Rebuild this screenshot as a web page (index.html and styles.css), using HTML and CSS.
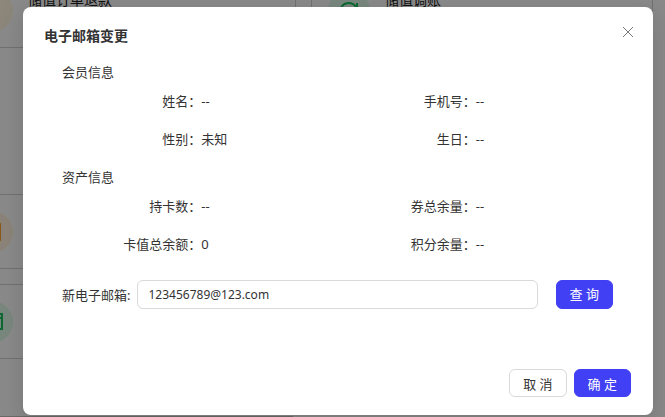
FILE: index.html
```html
<!DOCTYPE html>
<html lang="zh-CN">
<head>
    <meta charset="UTF-8">
    <meta name="viewport" content="width=device-width, initial-scale=1.0">
    <title>电子邮箱变更</title>
    <link rel="stylesheet" href="styles.css">
</head>
<body>
    <!-- Page behind the dialog, scrolled -->
    <div class="page" aria-hidden="true">
        <div class="cards">
            <div class="card">
                <span class="icon yellow"></span>
                <span class="card-title">储值订单退款</span>
            </div>
            <div class="card">
                <span class="icon green">
                    <svg viewBox="0 0 20 20" width="20" height="20"><path d="M2 7a8.5 8.5 0 0 1 15-1M18 2v5h-5M18 13a8.5 8.5 0 0 1-15 1M2 18v-5h5" /></svg>
                </span>
                <span class="card-title">储值调账</span>
            </div>
        </div>
        <div class="cards section">
            <div class="card">
                <span class="icon orange">
                    <svg viewBox="0 0 20 20" width="20" height="20"><path d="M1 2h17v16H1z" /></svg>
                </span>
            </div>
            <div class="card">
                <span class="icon green"></span>
            </div>
            <div class="card">
                <span class="icon green">
                    <svg viewBox="0 0 22 22" width="22" height="22"><path d="M1 3h20v15H1zM1 7h20" /></svg>
                </span>
            </div>
        </div>
        <div class="page-end"></div>
    </div>

    <div class="mask">
        <div class="modal" role="dialog" aria-labelledby="title">
            <div class="modal-header">
                <h1 id="title">电子邮箱变更</h1>
                <button class="close" aria-label="关闭">
                    <svg viewBox="0 0 12 12" width="12" height="12"><path d="M1 1l10 10M11 1L1 11" /></svg>
                </button>
            </div>

            <div class="modal-body">
                <h2>会员信息</h2>
                <dl class="info">
                    <div class="item"><dt>姓名：</dt><dd>--</dd></div>
                    <div class="item"><dt>手机号：</dt><dd>--</dd></div>
                    <div class="item"><dt>性别：</dt><dd>未知</dd></div>
                    <div class="item"><dt>生日：</dt><dd>--</dd></div>
                </dl>

                <h2>资产信息</h2>
                <dl class="info">
                    <div class="item"><dt>持卡数：</dt><dd>--</dd></div>
                    <div class="item"><dt>券总余量：</dt><dd>--</dd></div>
                    <div class="item"><dt>卡值总余额：</dt><dd>0</dd></div>
                    <div class="item"><dt>积分余量：</dt><dd>--</dd></div>
                </dl>

                <div class="search">
                    <label for="email">新电子邮箱:</label>
                    <input type="text" id="email" value="123456789@123.com">
                    <button class="btn primary">查 询</button>
                </div>
            </div>

            <div class="modal-footer">
                <button class="btn">取 消</button>
                <button class="btn primary">确 定</button>
            </div>
        </div>
    </div>
</body>
</html>
```
FILE: styles.css
```css
* {
    box-sizing: border-box;
}
body {
    margin: 0;
    overflow: hidden;
    font-family: "Noto Sans", "Noto Sans CJK SC", sans-serif;
    font-size: 13px;
    line-height: 20px;
    color: #333;
}
h1, h2, dl, dd {
    margin: 0;
    font-size: 13px;
}
h2 {
    font-weight: normal;
}

/* Page behind */
.page {
    position: fixed;
    inset: 0;
    overflow: hidden;
    background-color: #fcfcfc;
}
.cards {
    display: grid;
    grid-template-columns: 1fr 1fr;
    gap: 15px;
    margin: -27px 12px 0 -46px;
}
.section {
    margin-top: 146px;
}
.card {
    display: flex;
    align-items: center;
    gap: 15px;
    height: 75px;
    padding: 0 16px;
    border: 1px solid #d0d0d0;
}
.section .card:nth-child(2) {
    visibility: hidden;
}
.icon {
    display: flex;
    align-items: center;
    justify-content: center;
    width: 42px;
    height: 42px;
    border-radius: 50%;
}
.icon svg {
    fill: none;
    stroke: currentColor;
    stroke-width: 2;
}
.yellow {
    background-color: #fff6df;
}
.orange {
    background-color: #fff1dc;
    color: #ff9f2e;
}
.green {
    background-color: #dcf7e5;
    color: #18c060;
}
.card-title {
    margin-bottom: 22px;
    font-size: 14px;
    color: #222;
}
.page-end {
    width: 44%;
    height: 1px;
    margin-top: 57px;
    background-color: #c4c4c4;
}

/* Dialog */
.mask {
    position: fixed;
    inset: 0;
    padding: 7px 12px 0 23px;
    background-color: rgba(0, 0, 0, 0.45);
}
.modal {
    padding: 16px 22px 18px 21px;
    border-radius: 8px;
    background-color: #fff;
    box-shadow: 0 6px 16px rgba(0, 0, 0, 0.08), 0 9px 28px 8px rgba(0, 0, 0, 0.05);
}
.modal-header {
    display: flex;
    align-items: flex-start;
    justify-content: space-between;
    height: 26px;
}
h1 {
    padding-top: 3px;
    font-size: 14px;
}
.close {
    display: flex;
    padding: 3px;
    margin-right: -6px;
    border: none;
    background: none;
    cursor: pointer;
}
.close svg {
    fill: none;
    stroke: #777;
}
.modal-body {
    padding: 13px 18px 0;
}
.info {
    display: grid;
    grid-template-columns: 1fr 1fr;
    gap: 18px 0;
    padding: 9px 0 18px 2px;
}
.item {
    display: flex;
}
dt {
    width: 50%;
    text-align: right;
}
.search {
    display: flex;
    align-items: center;
    padding-top: 8px;
}
.search label {
    margin-right: 7px;
}
.search input {
    flex: 1;
    height: 29px;
    margin-right: 18px;
    padding: 0 10px;
    border: 1px solid #d9d9d9;
    border-radius: 6px;
    font-family: inherit;
    font-size: 12px;
    color: #333;
}
.btn {
    height: 29px;
    padding: 0 13px 2px;
    border: 1px solid #d9d9d9;
    border-radius: 6px;
    background-color: #fff;
    font-family: inherit;
    font-size: 13px;
    color: #333;
    cursor: pointer;
}
.primary {
    border-color: #4240f4;
    background-color: #4240f4;
    color: #fff;
}
.modal-footer {
    display: flex;
    justify-content: flex-end;
    gap: 7px;
    padding-top: 60px;
}
.modal-footer .btn {
    height: 28px;
    padding-bottom: 0;
}
```
